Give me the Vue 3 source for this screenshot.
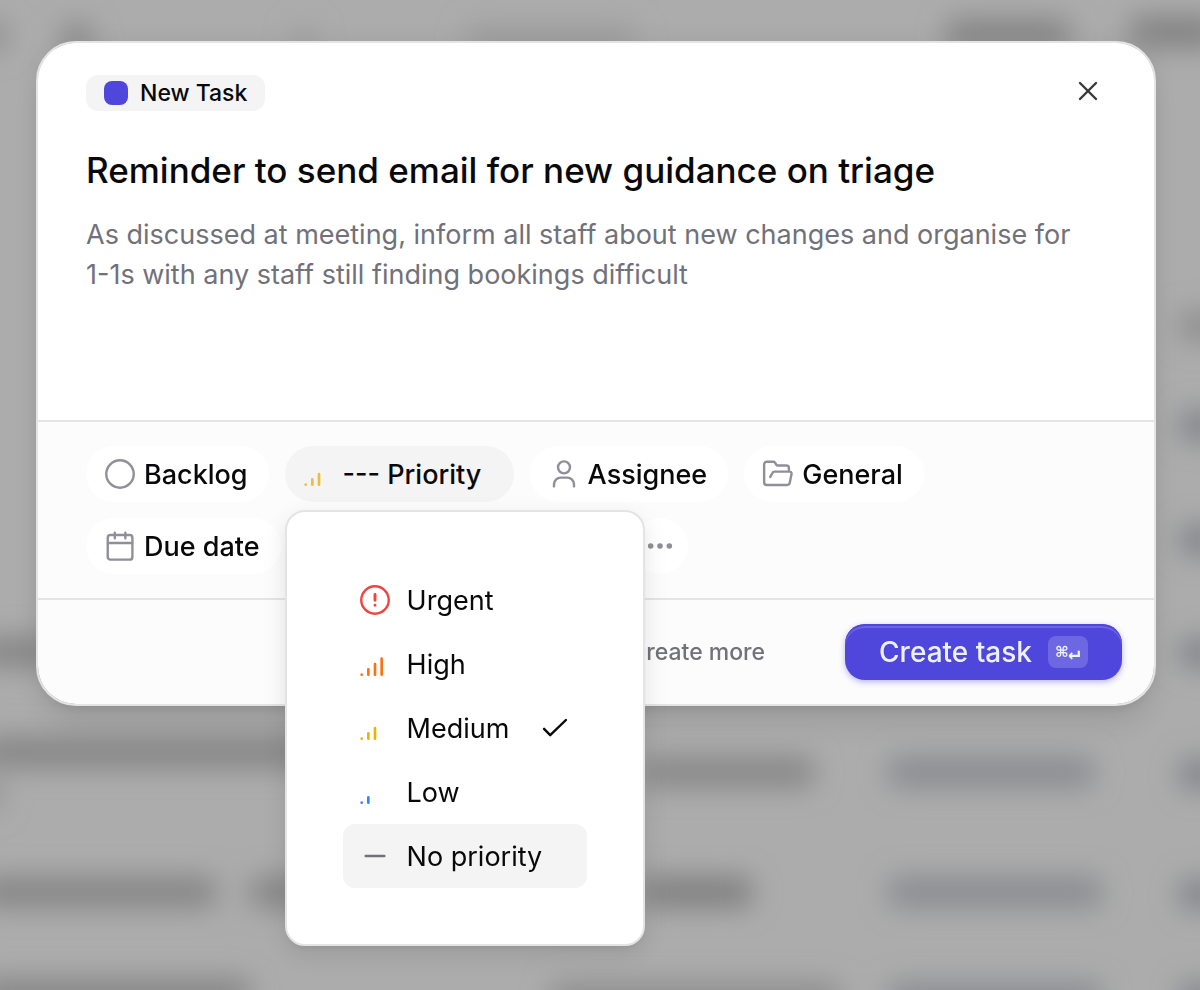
<template>
    <div class="page">
        <svg class="backdrop" viewBox="0 0 1200 990" preserveAspectRatio="xMidYMid slice" aria-hidden="true">
            <defs>
                <filter id="soft" x="-20%" y="-20%" width="140%" height="140%">
                    <feGaussianBlur stdDeviation="14" />
                </filter>
            </defs>
            <rect x="-100" y="-100" width="1400" height="1190" fill="#acacac" />
            <g filter="url(#soft)">
                <rect v-for="(bar, index) in backdropBars" :key="index" :x="bar[0]" :y="bar[1] - 15" :width="bar[2]"
                    height="30" rx="8" :fill="bar[3]" />
            </g>
        </svg>

        <form class="modal" role="dialog" aria-label="New Task" @submit.prevent>
            <section class="details">
                <div class="details-top">
                    <span class="tag"><span class="tag-color"></span>New Task</span>
                    <button type="button" class="close" aria-label="Close">
                        <svg class="icon" viewBox="0 0 24 24">
                            <path d="M6 6l12 12M18 6L6 18" />
                        </svg>
                    </button>
                </div>
                <input v-model="title" class="title" type="text" aria-label="Task title" />
                <textarea v-model="description" class="description" rows="4" aria-label="Description"
                    spellcheck="false"></textarea>
            </section>

            <section class="chips">
                <button type="button" class="chip">
                    <svg class="icon" viewBox="0 0 24 24">
                        <circle cx="12" cy="12" r="10.3" />
                    </svg>
                    Backlog
                </button>

                <div class="priority">
                    <button type="button" class="chip active" aria-haspopup="listbox" :aria-expanded="isOpen"
                        @click="isOpen = !isOpen">
                        <svg class="icon signal faded" viewBox="0 0 24 24" stroke="#eab308">
                            <path d="M2 20h.01M7 20v-4M12 20v-8" />
                        </svg>
                        --- Priority
                    </button>
                    <ul v-if="isOpen" class="menu" role="listbox" aria-label="Priority">
                        <li v-for="item in priorities" :key="item.name" class="option"
                            :class="{ hovered: item.name === 'No priority' }" role="option"
                            :aria-selected="item.name === selected" @click="selected = item.name">
                            <svg class="icon" :class="{ signal: item.signal }" viewBox="0 0 24 24"
                                :stroke="item.color">
                                <circle v-if="item.name === 'Urgent'" cx="12" cy="12" r="10.3" />
                                <path :d="item.path" :stroke-width="item.name === 'Urgent' ? 2.2 : undefined" />
                            </svg>
                            <span class="option-name">{{ item.name }}</span>
                            <svg v-if="item.name === selected" class="icon check" viewBox="0 0 24 24">
                                <path d="M3.8 12.6l4.6 4.8L20.2 6" />
                            </svg>
                        </li>
                    </ul>
                </div>

                <button type="button" class="chip">
                    <svg class="icon" viewBox="0 0 24 24">
                        <circle cx="12" cy="7" r="4.5" />
                        <path d="M4.5 21.2v-1.5a5 5 0 0 1 5-5h5a5 5 0 0 1 5 5v1.5" />
                    </svg>
                    Assignee
                </button>

                <button type="button" class="chip">
                    <svg class="icon" viewBox="0 0 24 24">
                        <path
                            d="M20.2 8.8V7.6a2 2 0 0 0-2-2h-6.4a1.5 1.5 0 0 1-1.3-.8L9.9 3.7a1.5 1.5 0 0 0-1.3-.9H3.6a2 2 0 0 0-2 2v13.4a2 2 0 0 0 2 2h15.2a2 2 0 0 0 2-1.7l1.4-6.6a1.5 1.5 0 0 0-1.5-1.7H9.6a2 2 0 0 0-1.9 1.2L6.2 14.2" />
                    </svg>
                    General
                </button>

                <button type="button" class="chip">
                    <svg class="icon" viewBox="0 0 24 24">
                        <rect x="2.8" y="3.8" width="18.5" height="18.4" rx="2" />
                        <path d="M8.1 2v4.2M16 2v4.2M3 9.8h18" />
                    </svg>
                    Due date
                </button>

                <button type="button" class="chip labels">
                    <svg class="icon" viewBox="0 0 24 24">
                        <path d="M3 3h9l9 9-9 9-9-9z" />
                    </svg>
                    Add labels
                </button>

                <button type="button" class="chip more" aria-label="More options">
                    <svg class="icon dots" viewBox="0 0 24 24">
                        <circle cx="5" cy="12" r="2.1" />
                        <circle cx="12" cy="12" r="2.1" />
                        <circle cx="19" cy="12" r="2.1" />
                    </svg>
                </button>
            </section>

            <footer class="footer">
                <label class="create-more"><input v-model="createMore" type="checkbox" />Create more</label>
                <button type="submit" class="submit">Create task <kbd>⌘↵</kbd></button>
            </footer>
        </form>
    </div>
</template>

<script setup>
import { ref } from 'vue';

const title = ref('Reminder to send email for new guidance on triage');
const description = ref('As discussed at meeting, inform all staff about new changes and organise for\n1-1s with any staff still finding bookings difficult');
const isOpen = ref(true);
const selected = ref('Medium');
const createMore = ref(false);

const priorities = [
    { name: 'Urgent', color: '#ef4444', path: 'M12 7.8v4.4M12 16h.01' },
    { name: 'High', color: '#f97316', signal: true, path: 'M2 20h.01M7 20v-4M12 20v-8M17 20V8' },
    { name: 'Medium', color: '#eab308', signal: true, path: 'M2 20h.01M7 20v-4M12 20v-8' },
    { name: 'Low', color: '#3b82f6', signal: true, path: 'M2 20h.01M7 20v-4' },
    { name: 'No priority', color: '#71717a', path: 'M5 12h14' },
];

// x, center y, width, fill
const backdropBars = [
    [-20, 36, 26, '#8c8c8c'],
    [62, 38, 30, '#888888'],
    [294, 40, 20, '#9c9c9c'],
    [466, 40, 170, '#9c9c9c'],
    [946, 34, 124, '#848484'],
    [1130, 32, 90, '#808080'],
    [1180, 326, 40, '#8c8c8c'],
    [1180, 426, 40, '#7e8286'],
    [1180, 540, 40, '#7e8286'],
    [1180, 653, 40, '#7e8286'],
    [-20, 652, 70, '#848484'],
    [-20, 752, 330, '#848484'],
    [-20, 795, 22, '#929292'],
    [-20, 892, 236, '#848484'],
    [250, 892, 60, '#848484'],
    [-20, 994, 270, '#848484'],
    [640, 772, 174, '#868686'],
    [888, 772, 206, '#888b8f'],
    [1180, 774, 40, '#7e8286'],
    [640, 892, 112, '#7e7e7e'],
    [888, 892, 214, '#888b8f'],
    [1180, 894, 40, '#7e8286'],
    [550, 998, 290, '#8c8c8c'],
    [888, 998, 214, '#888b8f'],
    [1180, 998, 40, '#7e8286'],
];
</script>

<style>
body {
    margin: 0;
    background: #acacac;
}
</style>

<style scoped>
.page {
    min-height: 100vh;
    padding: 41px 44px 41px 36px;
    box-sizing: border-box;
    font-family: Inter, "Liberation Sans", sans-serif;
    color: #09090b;
}

.backdrop {
    position: fixed;
    inset: 0;
    width: 100%;
    height: 100%;
}

.modal {
    position: relative;
    border: 2px solid #e4e4e4;
    border-radius: 40px;
    background: #fcfcfc;
    background-clip: padding-box;
    box-shadow: 0 20px 30px -6px rgba(0, 0, 0, 0.1), 0 8px 12px -8px rgba(0, 0, 0, 0.1), 0 0 24px rgba(0, 0, 0, 0.06);
}

button,
input,
textarea {
    font: inherit;
    color: inherit;
}

button {
    border: none;
    cursor: pointer;
}

.icon {
    flex: none;
    width: 32px;
    height: 32px;
    fill: none;
    stroke-width: 1.8;
    stroke-linecap: round;
    stroke-linejoin: round;
}

.signal {
    stroke-width: 2;
}

.faded {
    opacity: 0.8;
}

.details {
    padding: 32px 48px 45px;
    border-bottom: 2px solid #e4e4e4;
    border-radius: 38px 38px 0 0;
    background: #fff;
}

.details-top {
    display: flex;
    align-items: flex-start;
    justify-content: space-between;
}

.tag {
    display: flex;
    align-items: center;
    gap: 12px;
    height: 36px;
    padding: 0 18px;
    border-radius: 12px;
    background: #f4f4f4;
    font-size: 23px;
    font-weight: 500;
}

.tag-color {
    width: 24px;
    height: 24px;
    border-radius: 8px;
    background: #4f46dc;
}

.close {
    display: flex;
    align-items: center;
    justify-content: center;
    width: 36px;
    height: 32px;
    padding: 0;
    background: none;
}

.close .icon {
    stroke: #3a3a3a;
}

.title,
.description {
    display: block;
    width: 100%;
    padding: 0;
    border: none;
    outline: none;
    background: none;
}

.title {
    height: 46px;
    margin-top: 36px;
    font-size: 35px;
    font-weight: 500;
}

.description {
    margin-top: 22px;
    resize: none;
    overflow: hidden;
    font-size: 27px;
    line-height: 40px;
    color: #71717a;
}

.chips {
    display: flex;
    flex-wrap: wrap;
    gap: 16px;
    padding: 24px 48px;
    border-bottom: 2px solid #e4e4e4;
}

.chip {
    display: flex;
    align-items: center;
    gap: 8px;
    height: 56px;
    padding: 0 21px 0 18px;
    border-radius: 28px;
    background: #fff;
    font-size: 27px;
    font-weight: 500;
    white-space: nowrap;
}

.chip .icon:not(.signal, .dots) {
    stroke: #8f8f99;
}

.chip.active {
    min-width: 229px;
    background: #f4f4f4;
}

.chip.labels {
    width: 319px;
}

.chip.more {
    width: 56px;
    padding: 0 12px;
}

.chip .dots {
    fill: #8f8f99;
}

.priority {
    position: relative;
}

.menu {
    position: absolute;
    z-index: 1;
    top: 64px;
    left: 0;
    margin: 0;
    padding: 56px;
    border: 2px solid #e4e4e4;
    border-radius: 20px;
    background: #fff;
    list-style: none;
    box-shadow: 0 8px 24px rgba(0, 0, 0, 0.1), 0 4px 8px -4px rgba(0, 0, 0, 0.1);
}

.option {
    display: flex;
    align-items: center;
    gap: 16px;
    width: 212px;
    height: 64px;
    padding: 0 16px;
    border-radius: 12px;
    font-size: 27px;
    white-space: nowrap;
    cursor: pointer;
}

.option.hovered {
    background: #f4f4f4;
}

.option-name {
    flex: 1;
}

.check {
    stroke: #09090b;
}

.footer {
    display: flex;
    align-items: center;
    justify-content: flex-end;
    gap: 80px;
    padding: 24px 32px;
}

.create-more {
    display: flex;
    align-items: center;
    gap: 16px;
    font-size: 23px;
    font-weight: 500;
    color: #71717a;
}

.create-more input {
    width: 24px;
    height: 24px;
    margin: 0;
}

.submit {
    display: flex;
    align-items: center;
    gap: 16px;
    height: 56px;
    padding: 0 34px;
    border-radius: 20px;
    background: #4f46dc;
    box-shadow: inset 0 2px #4f46dc, inset 0 4px rgba(255, 255, 255, 0.16), 0 2px 6px rgba(79, 70, 220, 0.4);
    font-size: 28px;
    font-weight: 500;
    color: #eef2ff;
}

.submit kbd {
    display: flex;
    align-items: center;
    justify-content: center;
    width: 40px;
    height: 32px;
    border-radius: 8px;
    background: rgba(255, 255, 255, 0.18);
    font-family: "DejaVu Sans Mono", monospace;
    font-size: 20px;
    font-weight: 700;
}
</style>
